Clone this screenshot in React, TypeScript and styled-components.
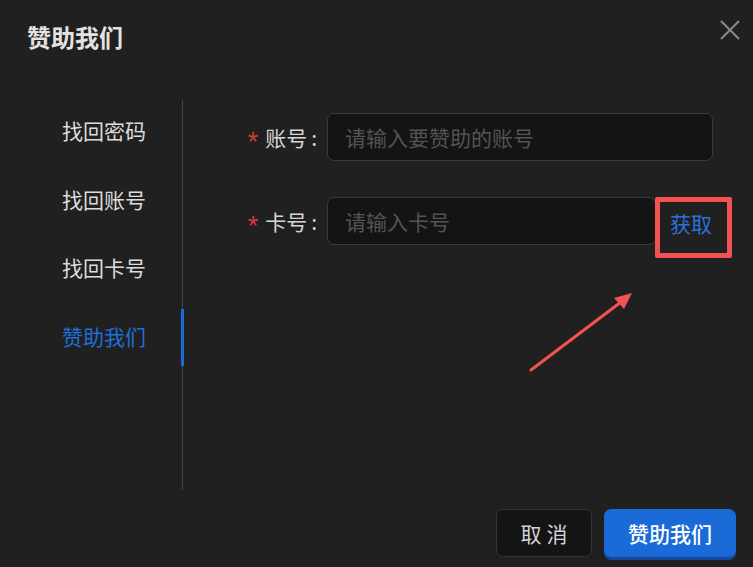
import React from 'react';
import styled, { createGlobalStyle } from 'styled-components';

const GlobalStyle = createGlobalStyle`
    html, body {
        margin: 0;
        padding: 0;
        background-color: #202020;
    }
    * {
        box-sizing: border-box;
    }
`;

const Modal = styled.div`
    position: relative;
    width: 753px;
    height: 567px;
    background-color: #202020;
    font-family: "Noto Sans CJK SC", "Noto Sans", sans-serif;
    display: flex;
    flex-direction: column;
    overflow: hidden;
`;

const Header = styled.div`
    height: 100px;
    padding: 20px 0 0 27px;
`;

const Title = styled.h1`
    margin: 0;
    font-size: 24px;
    line-height: 34px;
    font-weight: 700;
    color: #e2e2e2;
`;

const CloseButton = styled.button`
    position: absolute;
    top: 18px;
    right: 11px;
    width: 24px;
    height: 24px;
    padding: 0;
    border: none;
    background: transparent;
    display: flex;
    align-items: center;
    justify-content: center;
`;

const Body = styled.div`
    height: 390px;
    display: flex;
`;

const Sidebar = styled.nav`
    width: 183px;
    border-right: 1px solid #454545;
    padding: 15px 0 0 62px;
    display: flex;
    flex-direction: column;
    gap: 38.7px;
`;

const NavItem = styled.div<{ $active?: boolean }>`
    position: relative;
    font-size: 21px;
    line-height: 30px;
    color: ${p => (p.$active ? '#1f6fdb' : '#dcdcdc')};

    &::after {
        content: '';
        display: ${p => (p.$active ? 'block' : 'none')};
        position: absolute;
        right: -2px;
        top: -12px;
        width: 3px;
        height: 57px;
        background-color: #1a6ad8;
    }
`;

const Form = styled.div`
    flex: 1;
    padding: 13px 0 0 64px;
    display: flex;
    flex-direction: column;
    gap: 36px;
`;

const Row = styled.div`
    display: flex;
    align-items: flex-start;
`;

const Label = styled.label`
    width: 70px;
    height: 48px;
    margin-right: 10px;
    display: flex;
    align-items: center;
    justify-content: flex-end;
    font-size: 21px;
    color: #d6d6d6;
    white-space: nowrap;
`;

const Colon = styled.span`
    margin-left: 4px;
`;

const Required = styled.span`
    color: #d23a38;
    font-family: "Liberation Sans", sans-serif;
    font-size: 27px;
    line-height: 20px;
    height: 20px;
    margin-right: 7px;
    position: relative;
    top: 5px;
`;

const Input = styled.input<{ $width: number }>`
    width: ${p => p.$width}px;
    height: 48px;
    padding: 0 17px;
    border: 1px solid #3b3b3b;
    border-radius: 7px;
    background-color: #141414;
    color: #d6d6d6;
    font-family: "Noto Sans CJK SC", "Noto Sans", sans-serif;
    font-size: 21px;
    outline: none;

    &::placeholder {
        color: #535353;
    }
`;

const FetchButton = styled.button`
    width: 77px;
    height: 61px;
    margin-left: -1px;
    padding: 6px 5px 0 0;
    border: 5px solid #f25252;
    border-radius: 2px;
    background: transparent;
    color: #2a72dc;
    font-family: "Noto Sans CJK SC", "Noto Sans", sans-serif;
    font-size: 21px;
    line-height: 30px;
    display: flex;
    justify-content: center;
    align-items: flex-start;
`;

const Arrow = styled.svg`
    position: absolute;
    left: 0;
    top: 0;
    pointer-events: none;
`;

const Footer = styled.div`
    flex: 1;
    padding: 19px 17px 0 0;
    display: flex;
    justify-content: flex-end;
    align-items: flex-start;
    gap: 12px;
`;

const Button = styled.button<{ $primary?: boolean }>`
    height: 48px;
    width: ${p => (p.$primary ? 132 : 96)}px;
    border-radius: 7px;
    border: 1px solid ${p => (p.$primary ? '#1a6ad8' : '#333333')};
    background-color: ${p => (p.$primary ? '#1a6ad8' : '#141414')};
    color: ${p => (p.$primary ? '#ffffff' : '#d4d4d4')};
    box-shadow: ${p => (p.$primary ? '0 3px 0 #17479a' : 'none')};
    font-family: "Noto Sans CJK SC", "Noto Sans", sans-serif;
    font-size: 21px;
    font-weight: ${p => (p.$primary ? 500 : 400)};
    letter-spacing: ${p => (p.$primary ? 0 : 5)}px;
    padding: 0;
    padding-left: ${p => (p.$primary ? 0 : 5)}px;
`;

const navItems = ['找回密码', '找回账号', '找回卡号', '赞助我们'];

const App = () => {
    return (
        <Modal>
            <GlobalStyle />
            <Header>
                <Title>赞助我们</Title>
            </Header>
            <CloseButton aria-label="关闭">
                <svg width="22" height="22" viewBox="0 0 22 22">
                    <path d="M2 2 L20 20 M20 2 L2 20" stroke="#8a8a8a" strokeWidth="2" fill="none" />
                </svg>
            </CloseButton>
            <Body>
                <Sidebar>
                    {navItems.map(item => (
                        <NavItem key={item} $active={item === '赞助我们'}>
                            {item}
                        </NavItem>
                    ))}
                </Sidebar>
                <Form>
                    <Row>
                        <Label>
                            <Required>*</Required>账号<Colon>:</Colon>
                        </Label>
                        <Input $width={386} placeholder="请输入要赞助的账号" />
                    </Row>
                    <Row>
                        <Label>
                            <Required>*</Required>卡号<Colon>:</Colon>
                        </Label>
                        <Input $width={329} placeholder="请输入卡号" />
                        <FetchButton>获取</FetchButton>
                    </Row>
                </Form>
            </Body>
            <Footer>
                <Button>取消</Button>
                <Button $primary>赞助我们</Button>
            </Footer>
            <Arrow width="753" height="567" viewBox="0 0 753 567">
                <line x1="531" y1="370" x2="621" y2="302" stroke="#f25252" strokeWidth="3" strokeLinecap="round" />
                <polygon points="632,293 614,298 624,309" fill="#f25252" />
            </Arrow>
        </Modal>
    );
};

export default App;
